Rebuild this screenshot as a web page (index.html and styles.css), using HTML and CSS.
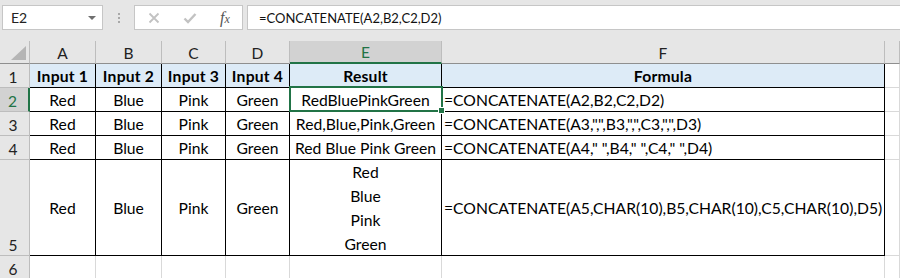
FILE: index.html
```html
<!DOCTYPE html>
<html lang="en">
<head>
  <meta charset="UTF-8">
  <title>CONCATENATE</title>
  <link rel="stylesheet" href="styles.css">
</head>
<body>
  <div class="toolbar">
    <div class="namebox">
      <span>E2</span>
      <span class="caret"></span>
    </div>
    <div class="grip"><i></i><i></i><i></i></div>
    <div class="fxbox">
      <svg width="12" height="12" viewBox="0 0 12 12"><path d="M1.5 1.5 L10.5 10.5 M10.5 1.5 L1.5 10.5" stroke="#c2c2c2" stroke-width="1.8" fill="none"/></svg>
      <svg width="14" height="12" viewBox="0 0 14 12"><path d="M1.5 6.5 L5 10 L12.5 2" stroke="#c2c2c2" stroke-width="2.4" fill="none"/></svg>
      <span class="fx">f<small>x</small></span>
    </div>
    <div class="formula">=CONCATENATE(A2,B2,C2,D2)</div>
  </div>

  <div class="sheet">
    <!-- column headers -->
    <div class="hd corner"><span class="tri"></span></div>
    <div class="hd">A</div>
    <div class="hd">B</div>
    <div class="hd">C</div>
    <div class="hd">D</div>
    <div class="hd active">E</div>
    <div class="hd">F</div>
    <div class="hd"></div>

    <!-- row 1 -->
    <div class="rh">1</div>
    <div class="cell tb head">Input 1</div>
    <div class="cell tb head">Input 2</div>
    <div class="cell tb head">Input 3</div>
    <div class="cell tb head">Input 4</div>
    <div class="cell tb head">Result</div>
    <div class="cell tb head">Formula</div>
    <div class="cell"></div>

    <!-- row 2 -->
    <div class="rh active">2</div>
    <div class="cell tb">Red</div>
    <div class="cell tb">Blue</div>
    <div class="cell tb">Pink</div>
    <div class="cell tb">Green</div>
    <div class="cell tb sel">RedBluePinkGreen</div>
    <div class="cell tb left">=CONCATENATE(A2,B2,C2,D2)</div>
    <div class="cell"></div>

    <!-- row 3 -->
    <div class="rh">3</div>
    <div class="cell tb">Red</div>
    <div class="cell tb">Blue</div>
    <div class="cell tb">Pink</div>
    <div class="cell tb">Green</div>
    <div class="cell tb">Red,Blue,Pink,Green</div>
    <div class="cell tb left">=CONCATENATE(A3,",",B3,",",C3,",",D3)</div>
    <div class="cell"></div>

    <!-- row 4 -->
    <div class="rh">4</div>
    <div class="cell tb">Red</div>
    <div class="cell tb">Blue</div>
    <div class="cell tb">Pink</div>
    <div class="cell tb">Green</div>
    <div class="cell tb">Red Blue Pink Green</div>
    <div class="cell tb left">=CONCATENATE(A4," ",B4," ",C4," ",D4)</div>
    <div class="cell"></div>

    <!-- row 5 -->
    <div class="rh tall">5</div>
    <div class="cell tb">Red</div>
    <div class="cell tb">Blue</div>
    <div class="cell tb">Pink</div>
    <div class="cell tb">Green</div>
    <div class="cell tb wrap">Red<br>Blue<br>Pink<br>Green</div>
    <div class="cell tb left">=CONCATENATE(A5,CHAR(10),B5,CHAR(10),C5,CHAR(10),D5)</div>
    <div class="cell"></div>

    <!-- row 6 -->
    <div class="rh">6</div>
    <div class="cell"></div>
    <div class="cell"></div>
    <div class="cell"></div>
    <div class="cell"></div>
    <div class="cell"></div>
    <div class="cell"></div>
    <div class="cell"></div>
  </div>
</body>
</html>
```

FILE: styles.css
```css
body {
  margin: 0;
  background-color: #e6e6e6;
  font-family: 'Lato', 'Liberation Sans', sans-serif;
  font-size: 15.7px;
  color: #000;
  overflow: hidden;
}
.toolbar {
  display: flex;
  align-items: stretch;
  height: 25px;
  padding: 5px 0 11px 2px;
  font-size: 13px;
}
.namebox {
  width: 101px;
  box-sizing: border-box;
  background-color: white;
  border: 1px solid #c6c6c6;
  display: flex;
  align-items: center;
  justify-content: space-between;
  padding: 0 6px 0 8px;
  color: #222;
  font-size: 14px;
}
.caret {
  width: 0;
  height: 0;
  border-left: 4px solid transparent;
  border-right: 4px solid transparent;
  border-top: 4px solid #6f6f6f;
}
.grip {
  width: 31px;
  display: flex;
  flex-direction: column;
  align-items: center;
  justify-content: center;
  gap: 2px;
}
.grip i {
  width: 2px;
  height: 2px;
  background-color: #a8a8a8;
}
.fxbox {
  width: 109px;
  box-sizing: border-box;
  background-color: white;
  border: 1px solid #c6c6c6;
  display: flex;
  align-items: center;
  padding: 0 0 0 13px;
  gap: 23px;
}
.fx {
  font-family: 'Liberation Serif', serif;
  font-style: italic;
  font-size: 16px;
  color: #555;
}
.fx small {
  font-size: 12px;
}
.formula {
  flex: 1;
  margin-left: 4px;
  background-color: white;
  border: 1px solid #c6c6c6;
  border-right: none;
  display: flex;
  align-items: center;
  padding-left: 11px;
  color: #111;
}
.sheet {
  display: grid;
  grid-template-columns: 30px 66px 66px 64px 64px 152px 443px 1fr;
  grid-template-rows: 23px 24px 24px 24px 24px 96px 24px;
  background-color: white;
}
.hd {
  background-color: #e6e6e6;
  border-right: 1px solid #bdbdbd;
  border-bottom: 1px solid #8f8f8f;
  box-sizing: border-box;
  display: flex;
  align-items: center;
  justify-content: center;
  color: #222;
  font-size: 15.5px;
  padding-top: 1px;
}
.hd.active {
  background-color: #d2d2d2;
  color: #217346;
  border-bottom: 2px solid #217346;
}
.corner {
  position: relative;
}
.tri {
  position: absolute;
  right: 3px;
  bottom: 3px;
  width: 0;
  height: 0;
  border-left: 15px solid transparent;
  border-bottom: 14px solid #b5b5b5;
}
.rh {
  background-color: #e6e6e6;
  border-right: 1px solid #bdbdbd;
  border-bottom: 1px solid #bdbdbd;
  box-sizing: border-box;
  display: flex;
  align-items: flex-end;
  justify-content: center;
  color: #222;
  font-size: 15.5px;
  padding-bottom: 1px;
  padding-right: 3px;
}
.rh.active {
  background-color: #d2d2d2;
  color: #217346;
  border-right: 2px solid #217346;
}
.cell {
  border-right: 1px solid #d9d9d9;
  border-bottom: 1px solid #d9d9d9;
  box-sizing: border-box;
  display: flex;
  align-items: center;
  justify-content: center;
  white-space: nowrap;
}
.cell.tb {
  border-right-color: #000;
  border-bottom-color: #000;
}
.cell.head {
  background-color: #ddebf7;
  font-weight: bold;
  letter-spacing: 0.2px;
}
.cell.left {
  justify-content: flex-start;
  padding-left: 2px;
}
.cell.wrap {
  text-align: center;
  line-height: 24px;
}
.sel {
  position: relative;
}
.sel::after {
  content: '';
  position: absolute;
  top: -2px;
  left: -1px;
  right: -2px;
  bottom: -1px;
  border: 2px solid #217346;
}
.sel::before {
  content: '';
  position: absolute;
  right: -4px;
  bottom: -3px;
  width: 5px;
  height: 5px;
  background-color: #217346;
  border: 1px solid white;
  z-index: 1;
}
```
